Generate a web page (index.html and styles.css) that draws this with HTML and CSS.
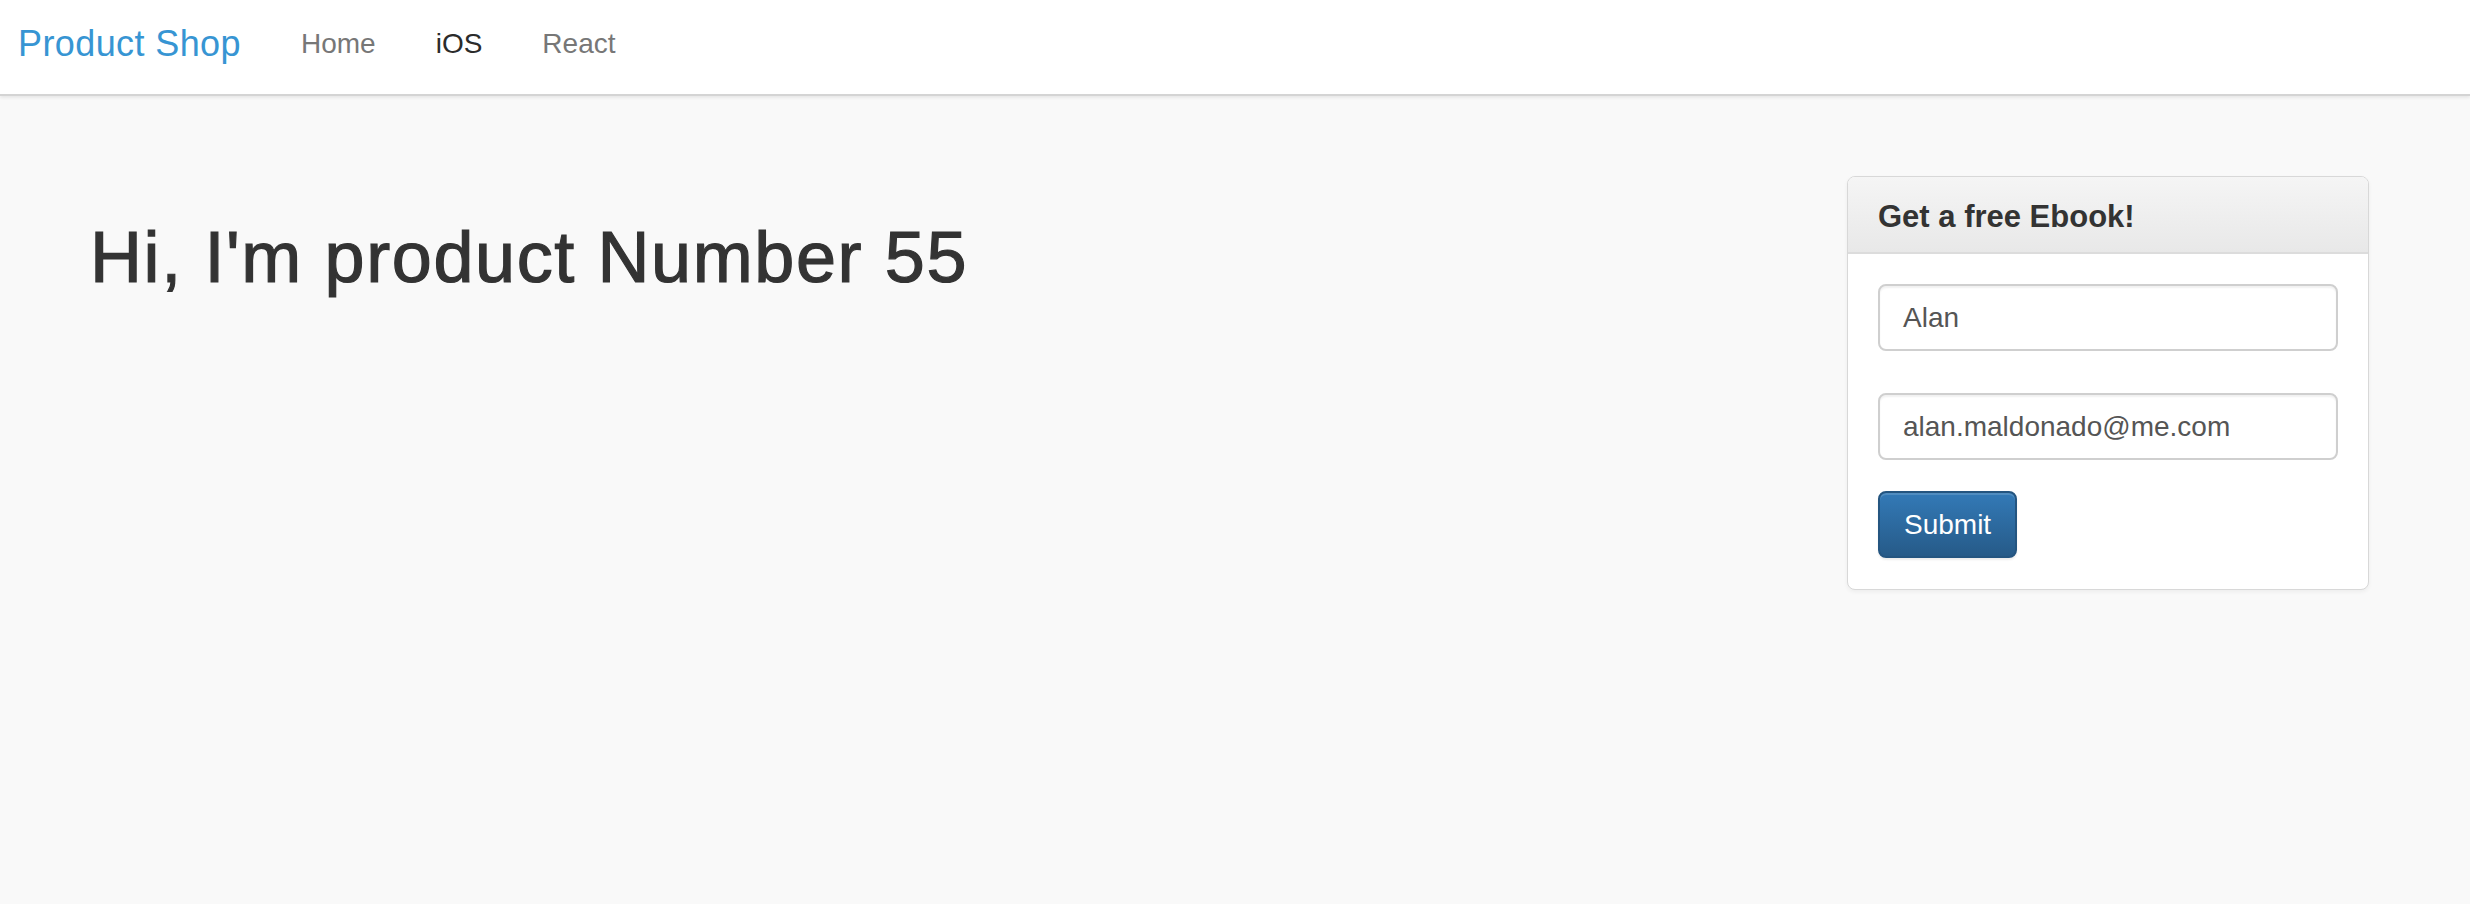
FILE: index.html
```html
<!DOCTYPE html>
<html lang="en">
<head>
<meta charset="utf-8">
<title>Product Shop</title>
<link rel="stylesheet" href="styles.css">
</head>
<body>
<nav class="navbar">
  <a class="brand" href="#">Product Shop</a>
  <ul class="nav">
    <li><a class="nav-link" href="#">Home</a></li>
    <li><a class="nav-link active" href="#">iOS</a></li>
    <li><a class="nav-link" href="#">React</a></li>
  </ul>
</nav>
<main class="page">
  <h1 class="title">Hi, I'm product Number 55</h1>
  <aside class="panel">
    <div class="panel-heading"><h3 class="panel-title">Get a free Ebook!</h3></div>
    <form class="panel-body">
      <div class="field" role="textbox">Alan</div>
      <div class="field" role="textbox">alan.maldonado@me.com</div>
      <button class="btn" type="button">Submit</button>
    </form>
  </aside>
</main>
</body>
</html>
```
FILE: styles.css
```css
* { box-sizing: border-box; }
html, body { margin: 0; padding: 0; }
body {
  background: #f9f9f9;
  font-family: "Liberation Sans", Arial, sans-serif;
  color: #333;
  min-height: 904px;
}
.navbar {
  display: flex;
  align-items: flex-start;
  height: 96px;
  padding: 24px 0 0 18px;
  background: #fff;
  border-bottom: 2px solid #d4d4d4;
  box-shadow: 0 2px 3px rgba(0,0,0,0.07);
}
.brand {
  font-size: 36px;
  line-height: 40px;
  letter-spacing: 0.4px;
  color: #3795d3;
  text-decoration: none;
  padding-right: 30px;
}
.nav {
  display: flex;
  list-style: none;
  margin: 0;
  padding: 0;
}
.nav-link {
  display: block;
  padding: 0 30px;
  font-size: 28px;
  line-height: 40px;
  color: #777;
  text-decoration: none;
}
.nav-link.active { color: #2b2b2b; }

.page {
  display: flex;
  justify-content: space-between;
  align-items: flex-start;
  padding: 80px 101px 0 90px;
}
.title {
  margin: 42px 0 0;
  font-size: 72px;
  line-height: 79px;
  font-weight: normal;
  letter-spacing: 1.6px;
  -webkit-text-stroke: 1.2px #333;
  color: #333;
}
.panel {
  width: 522px;
  background: #fff;
  border: 1px solid #d8d8d8;
  border-radius: 8px;
  box-shadow: 0 2px 4px rgba(0,0,0,0.05);
  overflow: hidden;
}
.panel-heading {
  padding: 22px 30px 18px;
  background: linear-gradient(to bottom, #f5f5f5, #e8e8e8);
  border-bottom: 2px solid #dcdcdc;
}
.panel-title {
  margin: 0;
  font-size: 31px;
  line-height: 35px;
  font-weight: bold;
  color: #333;
}
.panel-body {
  display: flex;
  flex-direction: column;
  align-items: flex-start;
  padding: 30px 30px 31px;
  margin: 0;
}
.field {
  width: 100%;
  height: 67px;
  padding: 0 23px;
  border: 2px solid #cfcfcf;
  border-radius: 8px;
  box-shadow: inset 0 2px 2px rgba(0,0,0,0.06);
  font-size: 28px;
  line-height: 63px;
  color: #555;
  background: #fff;
  margin-bottom: 42px;
}
.field + .field { margin-bottom: 31px; }
.btn {
  height: 67px;
  padding: 0 24px;
  border: 2px solid #245580;
  border-radius: 8px;
  background: linear-gradient(to bottom, #337ab7, #265a88);
  box-shadow: inset 0 2px 0 rgba(255,255,255,0.15), 0 2px 2px rgba(0,0,0,0.075);
  font-family: "Liberation Sans", Arial, sans-serif;
  font-size: 28px;
  line-height: 63px;
  color: #fff;
  cursor: pointer;
}
```
